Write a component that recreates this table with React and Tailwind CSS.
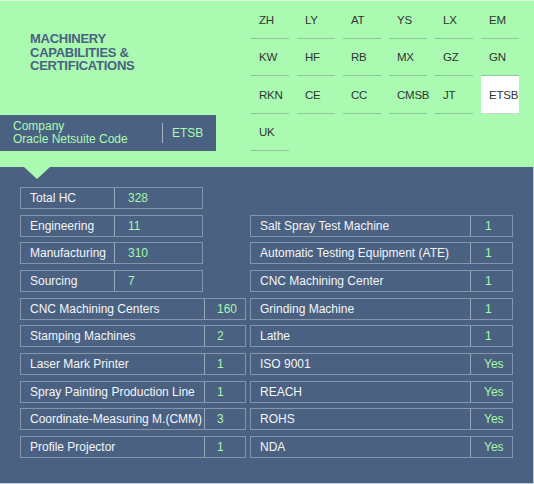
const TABS = [
  'ZH', 'LY', 'AT', 'YS', 'LX', 'EM',
  'KW', 'HF', 'RB', 'MX', 'GZ', 'GN',
  'RKN', 'CE', 'CC', 'CMSB', 'JT', 'ETSB',
  'UK',
];

const LEFT_ROWS = [
  { label: 'Total HC', value: '328', short: true },
  { label: 'Engineering', value: '11', short: true },
  { label: 'Manufacturing', value: '310', short: true },
  { label: 'Sourcing', value: '7', short: true },
  { label: 'CNC Machining Centers', value: '160' },
  { label: 'Stamping Machines', value: '2' },
  { label: 'Laser Mark Printer', value: '1' },
  { label: 'Spray Painting Production Line', value: '1' },
  { label: 'Coordinate-Measuring M.(CMM)', value: '3' },
  { label: 'Profile Projector', value: '1' },
];

const RIGHT_ROWS = [
  { label: 'Salt Spray Test Machine', value: '1' },
  { label: 'Automatic Testing Equipment (ATE)', value: '1' },
  { label: 'CNC Machining Center', value: '1' },
  { label: 'Grinding Machine', value: '1' },
  { label: 'Lathe', value: '1' },
  { label: 'ISO 9001', value: 'Yes' },
  { label: 'REACH', value: 'Yes' },
  { label: 'ROHS', value: 'Yes' },
  { label: 'NDA', value: 'Yes' },
];

function Row({ label, value, labelW, valuePad }) {
  return (
    <div className="flex h-[22px] border border-[#8595ac] text-[12px] leading-none">
      <div className={`${labelW} flex items-center pl-[9px] text-[#f3f6f9] whitespace-nowrap`}>{label}</div>
      <div className={`flex-1 flex items-center border-l border-[#9aa8bb] ${valuePad} text-[#a7f7ae]`}>{value}</div>
    </div>
  );
}

export default function App() {
  const active = 'ETSB';
  return (
    <div className="w-[534px] h-[484px] overflow-hidden bg-[#4a6181]" style={{ fontFamily: '"Liberation Sans", Arial, sans-serif' }}>
      {/* Top: title, company code, site tabs */}
      <div className="relative flex h-[167px] bg-[#aafbb1] border-t border-[#d9fddb]">
        <div className="w-[251px] flex flex-col">
          <h1 className="pt-[31px] pl-[30px] text-[13px] leading-[13.5px] font-bold tracking-[-0.02em] text-[#4a6181]">
            MACHINERY<br />CAPABILITIES &amp;<br />CERTIFICATIONS
          </h1>
          <div className="mt-auto mb-[16px] w-[216px] h-[36px] flex items-center bg-[#4a6181] text-[#aafbb1] text-[12px]">
            <div className="pl-[13px] w-[162px] leading-[13px]">
              Company<br />Oracle Netsuite Code
            </div>
            <div className="h-[20px] border-l border-[#a5b2c3]" />
            <div className="pl-[9px]">ETSB</div>
          </div>
        </div>
        <div className="grid grid-cols-[repeat(6,38px)] gap-x-[8px] auto-rows-[37.5px] content-start">
          {TABS.map((t) => (
            <div
              key={t}
              className={`flex items-center pl-[8px] pt-[2px] text-[11.5px] tracking-[-0.02em] whitespace-nowrap text-[#2f3432] border-b ${
                t === active ? 'bg-white border-[#cfd6d2]' : 'border-[#8fc79c]'
              }`}
            >
              {t}
            </div>
          ))}
        </div>
        <div className="absolute left-[24px] top-[166px] w-0 h-0 border-l-[13px] border-r-[13px] border-t-[12px] border-l-transparent border-r-transparent border-t-[#aafbb1]" />
      </div>

      {/* Bottom: capability tables */}
      <div className="h-[317px] border-r border-b border-[#c4cbd5] pt-[20px] pl-[20px] grid grid-cols-[226px_263px] gap-x-[4px] content-start">
        <div className="flex flex-col gap-y-[5.67px]">
          {LEFT_ROWS.map((r) =>
            r.short ? (
              <div key={r.label} className="w-[183px]">
                <Row label={r.label} value={r.value} labelW="w-[93px]" valuePad="pl-[13px]" />
              </div>
            ) : (
              <Row key={r.label} label={r.label} value={r.value} labelW="w-[183px]" valuePad="pl-[12px]" />
            )
          )}
        </div>
        <div className="flex flex-col gap-y-[5.67px] pt-[27.67px]">
          {RIGHT_ROWS.map((r) => (
            <Row
              key={r.label}
              label={r.label}
              value={r.value}
              labelW="w-[219px]"
              valuePad={r.value === 'Yes' ? 'pl-[13px]' : 'pl-[14px]'}
            />
          ))}
        </div>
      </div>
    </div>
  );
}
